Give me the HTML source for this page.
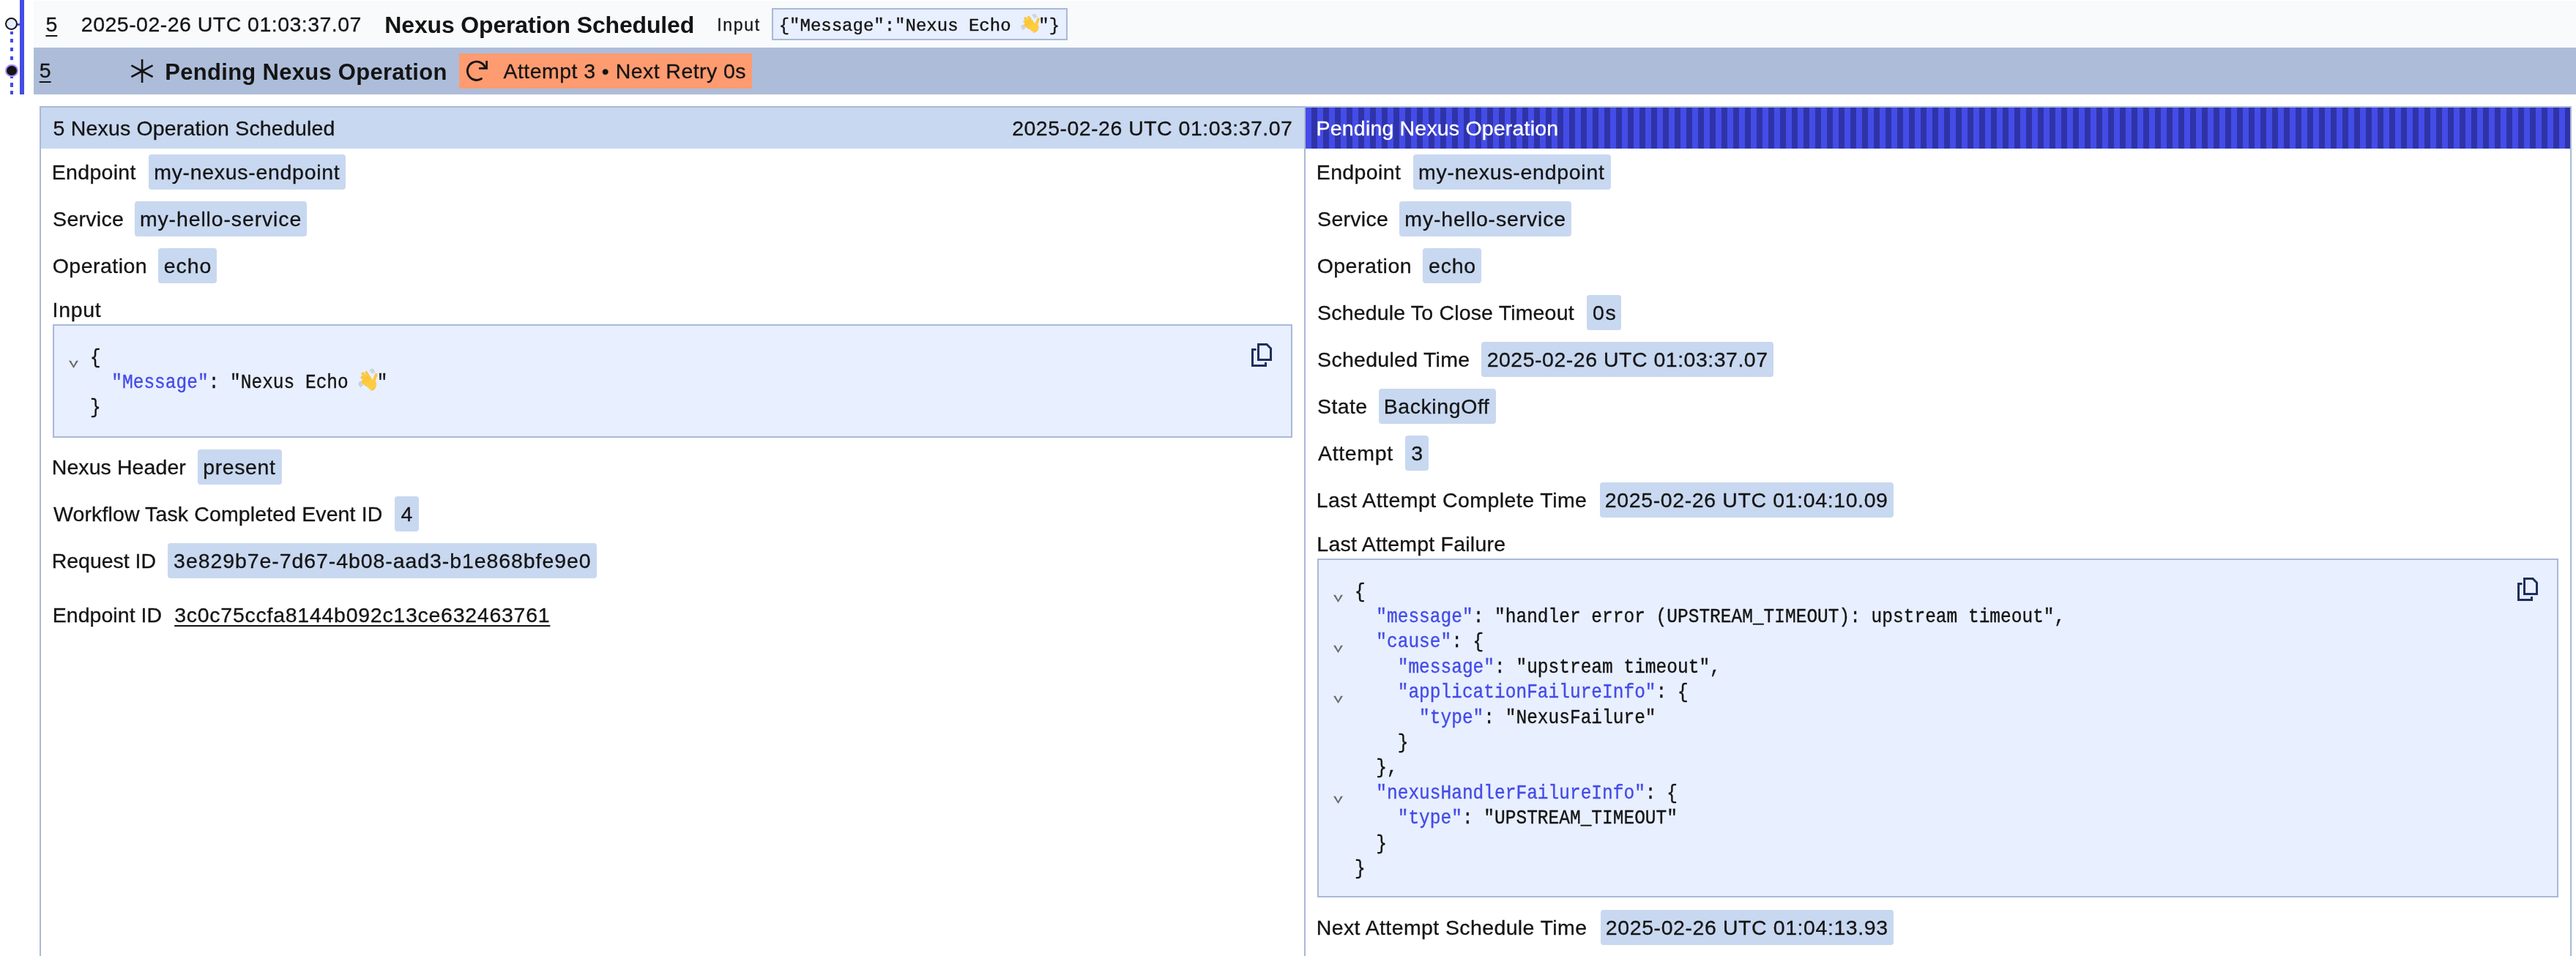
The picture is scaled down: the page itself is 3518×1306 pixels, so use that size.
<!DOCTYPE html>
<html><head><meta charset="utf-8"><title>Nexus Operation</title>
<style>
html,body{margin:0;padding:0;width:3518px;height:1306px;overflow:hidden;background:#fff}
.code{position:absolute;-webkit-text-stroke-width:0.35px;font-family:'Liberation Mono',monospace;font-size:24.5px;line-height:24.5px;color:#141414;white-space:pre}
</style></head><body>
<div style="position:absolute;left:46px;top:1px;width:3472px;height:64px;background:#f8fafc"></div><div style="position:absolute;left:1054px;top:11px;width:404px;height:44px;background:#e8efff;border:2px solid #a9b9d6;box-sizing:border-box"></div><div style="position:absolute;left:46px;top:65px;width:3472px;height:64px;background:#adbdd9"></div><div style="position:absolute;left:627px;top:73px;width:400px;height:48px;background:#ff9b70"></div><div style="position:absolute;left:54px;top:145px;width:3458px;height:1161px;border:2px solid #a9b9d6;border-bottom:none;box-sizing:border-box;background:#fff"></div><div style="position:absolute;left:56px;top:147px;width:1725px;height:56px;background:#c8d8f0"></div><div style="position:absolute;left:1781px;top:147px;width:2px;height:1159px;background:#a9b9d6"></div><div style="position:absolute;left:1783px;top:147px;width:1727px;height:56px;background:repeating-linear-gradient(90deg,#444ce7 0 8px,#2f33a8 8px 16px)"></div><div style="position:absolute;left:203.3px;top:211px;width:269.2px;height:48px;background:#c8d8f0;border-radius:4px"></div><div style="position:absolute;left:184px;top:275px;width:234.8px;height:48px;background:#c8d8f0;border-radius:4px"></div><div style="position:absolute;left:216px;top:339px;width:80px;height:48px;background:#c8d8f0;border-radius:4px"></div><div style="position:absolute;left:270.4px;top:614px;width:114.20000000000005px;height:48px;background:#c8d8f0;border-radius:4px"></div><div style="position:absolute;left:539.2px;top:678px;width:33.299999999999955px;height:48px;background:#c8d8f0;border-radius:4px"></div><div style="position:absolute;left:229.3px;top:742px;width:585.3px;height:48px;background:#c8d8f0;border-radius:4px"></div><div style="position:absolute;left:1930.2px;top:211px;width:269.4999999999998px;height:48px;background:#c8d8f0;border-radius:4px"></div><div style="position:absolute;left:1911.4px;top:275px;width:234.29999999999973px;height:48px;background:#c8d8f0;border-radius:4px"></div><div style="position:absolute;left:1943.2px;top:339px;width:79.5px;height:48px;background:#c8d8f0;border-radius:4px"></div><div style="position:absolute;left:2167.2px;top:403px;width:47.30000000000018px;height:48px;background:#c8d8f0;border-radius:4px"></div><div style="position:absolute;left:2023.3px;top:467px;width:398.29999999999995px;height:48px;background:#c8d8f0;border-radius:4px"></div><div style="position:absolute;left:1883.2px;top:531px;width:159.39999999999986px;height:48px;background:#c8d8f0;border-radius:4px"></div><div style="position:absolute;left:1919.4px;top:595px;width:32.09999999999991px;height:48px;background:#c8d8f0;border-radius:4px"></div><div style="position:absolute;left:2184.5px;top:659px;width:401.0px;height:48px;background:#c8d8f0;border-radius:4px"></div><div style="position:absolute;left:2185.5px;top:1243px;width:400.0999999999999px;height:48px;background:#c8d8f0;border-radius:4px"></div><div style="position:absolute;left:72px;top:443px;width:1693px;height:155px;background:#e8efff;border:2px solid #a9b9d6;box-sizing:border-box"></div><div style="position:absolute;left:1799px;top:763px;width:1695px;height:463px;background:#e8efff;border:2px solid #a9b9d6;box-sizing:border-box"></div>

<div style="position:absolute;left:27px;top:0;width:6px;height:129px;background:#444ce7"></div>
<div style="position:absolute;left:14px;top:43.3px;width:4px;height:3.7px;background:#444ce7"></div><div style="position:absolute;left:14px;top:52.7px;width:4px;height:5.7px;background:#444ce7"></div><div style="position:absolute;left:14px;top:64.6px;width:4px;height:5.7px;background:#444ce7"></div><div style="position:absolute;left:14px;top:76.6px;width:4px;height:5.6px;background:#444ce7"></div><div style="position:absolute;left:14px;top:100.5px;width:4px;height:6.0px;background:#444ce7"></div><div style="position:absolute;left:14px;top:113px;width:4px;height:5.7px;background:#444ce7"></div><div style="position:absolute;left:14px;top:124.3px;width:4px;height:4.4px;background:#444ce7"></div>
<div style="position:absolute;left:22px;top:31.5px;width:6px;height:3.5px;background:#444ce7"></div>
<div style="position:absolute;left:7.2px;top:24.2px;width:17.3px;height:17.3px;border-radius:50%;border:2.6px solid #141414;background:#e6edff;box-sizing:border-box"></div>
<div style="position:absolute;left:7.3px;top:88px;width:17.4px;height:17.4px;border-radius:50%;border:2.4px solid #a78bfa;background:#141414;box-sizing:border-box"></div>

<svg style="position:absolute;left:176px;top:80px" width="36" height="34" viewBox="0 0 36 34"><path d="M18.1 0.9 V32.9 M3.4 9.3 L32.6 25 M3.4 25 L32.6 9.3" stroke="#141414" stroke-width="2.6" fill="none"/></svg>
<svg style="position:absolute;left:634px;top:80px" width="36" height="34" viewBox="0 0 36 34"><path d="M28.32 11.28 A12.6 12.6 0 1 0 23.49 27.6" fill="none" stroke="#141414" stroke-width="2.9" stroke-linecap="round"/><path d="M20.1 13.45 H30.6 V2.9" fill="none" stroke="#141414" stroke-width="2.7" stroke-linejoin="miter"/></svg>
<div style="position:absolute;left:0;top:0;width:3518px;height:1306px;will-change:transform"><div style="position:absolute;left:62.41px;top:19.00px;font-family:'Liberation Sans';font-weight:normal;font-size:28.5px;line-height:28.5px;letter-spacing:0.000px;color:#141414;white-space:pre;-webkit-text-stroke:0.3px #141414;text-decoration:underline;text-decoration-thickness:2px;text-underline-offset:5px">5</div><div style="position:absolute;left:110.86px;top:19.00px;font-family:'Liberation Sans';font-weight:normal;font-size:28.5px;line-height:28.5px;letter-spacing:0.470px;color:#141414;white-space:pre;-webkit-text-stroke:0.3px #141414;">2025-02-26 UTC 01:03:37.07</div><div style="position:absolute;left:525.30px;top:18.00px;font-family:'Liberation Sans';font-weight:bold;font-size:32px;line-height:32px;letter-spacing:-0.159px;color:#141414;white-space:pre;">Nexus Operation Scheduled</div><div style="position:absolute;left:979.30px;top:23.00px;font-family:'Liberation Sans';font-weight:normal;font-size:23px;line-height:23px;letter-spacing:1.659px;color:#141414;white-space:pre;-webkit-text-stroke:0.3px #141414;">Input</div><div style="position:absolute;left:53.71px;top:82.00px;font-family:'Liberation Sans';font-weight:normal;font-size:28.5px;line-height:28.5px;letter-spacing:0.000px;color:#141414;white-space:pre;-webkit-text-stroke:0.3px #141414;text-decoration:underline;text-decoration-thickness:2px;text-underline-offset:5px">5</div><div style="position:absolute;left:225.36px;top:83.00px;font-family:'Liberation Sans';font-weight:bold;font-size:31px;line-height:31px;letter-spacing:0.277px;color:#141414;white-space:pre;">Pending Nexus Operation</div><div style="position:absolute;left:687.50px;top:83.00px;font-family:'Liberation Sans';font-weight:normal;font-size:28.5px;line-height:28.5px;letter-spacing:0.445px;color:#141414;white-space:pre;-webkit-text-stroke:0.3px #141414;">Attempt 3 • Next Retry 0s</div><div style="position:absolute;left:72.61px;top:161.00px;font-family:'Liberation Sans';font-weight:normal;font-size:28.5px;line-height:28.5px;letter-spacing:0.171px;color:#141414;white-space:pre;-webkit-text-stroke:0.3px #141414;">5 Nexus Operation Scheduled</div><div style="position:absolute;left:1382.16px;top:161.00px;font-family:'Liberation Sans';font-weight:normal;font-size:28.5px;line-height:28.5px;letter-spacing:0.482px;color:#141414;white-space:pre;-webkit-text-stroke:0.3px #141414;">2025-02-26 UTC 01:03:37.07</div><div style="position:absolute;left:1797.57px;top:161.00px;font-family:'Liberation Sans';font-weight:normal;font-size:28.5px;line-height:28.5px;letter-spacing:0.189px;color:#ffffff;white-space:pre;-webkit-text-stroke:0.3px #ffffff;">Pending Nexus Operation</div><div style="position:absolute;left:70.77px;top:220.60px;font-family:'Liberation Sans';font-weight:normal;font-size:28.5px;line-height:28.5px;letter-spacing:0.303px;color:#141414;white-space:pre;-webkit-text-stroke:0.3px #141414;">Endpoint</div><div style="position:absolute;left:210.22px;top:220.60px;font-family:'Liberation Sans';font-weight:normal;font-size:28.5px;line-height:28.5px;letter-spacing:0.694px;color:#141414;white-space:pre;-webkit-text-stroke:0.3px #141414;">my-nexus-endpoint</div><div style="position:absolute;left:72.11px;top:284.60px;font-family:'Liberation Sans';font-weight:normal;font-size:28.5px;line-height:28.5px;letter-spacing:0.286px;color:#141414;white-space:pre;-webkit-text-stroke:0.3px #141414;">Service</div><div style="position:absolute;left:190.92px;top:284.60px;font-family:'Liberation Sans';font-weight:normal;font-size:28.5px;line-height:28.5px;letter-spacing:0.858px;color:#141414;white-space:pre;-webkit-text-stroke:0.3px #141414;">my-hello-service</div><div style="position:absolute;left:71.66px;top:348.60px;font-family:'Liberation Sans';font-weight:normal;font-size:28.5px;line-height:28.5px;letter-spacing:0.484px;color:#141414;white-space:pre;-webkit-text-stroke:0.3px #141414;">Operation</div><div style="position:absolute;left:223.81px;top:348.60px;font-family:'Liberation Sans';font-weight:normal;font-size:28.5px;line-height:28.5px;letter-spacing:0.948px;color:#141414;white-space:pre;-webkit-text-stroke:0.3px #141414;">echo</div><div style="position:absolute;left:71.57px;top:409.00px;font-family:'Liberation Sans';font-weight:normal;font-size:28.5px;line-height:28.5px;letter-spacing:0.685px;color:#141414;white-space:pre;-webkit-text-stroke:0.3px #141414;">Input</div><div style="position:absolute;left:70.77px;top:623.60px;font-family:'Liberation Sans';font-weight:normal;font-size:28.5px;line-height:28.5px;letter-spacing:0.081px;color:#141414;white-space:pre;-webkit-text-stroke:0.3px #141414;">Nexus Header</div><div style="position:absolute;left:277.32px;top:623.60px;font-family:'Liberation Sans';font-weight:normal;font-size:28.5px;line-height:28.5px;letter-spacing:0.571px;color:#141414;white-space:pre;-webkit-text-stroke:0.3px #141414;">present</div><div style="position:absolute;left:73.00px;top:687.60px;font-family:'Liberation Sans';font-weight:normal;font-size:28.5px;line-height:28.5px;letter-spacing:0.118px;color:#141414;white-space:pre;-webkit-text-stroke:0.3px #141414;">Workflow Task Completed Event ID</div><div style="position:absolute;left:547.45px;top:687.60px;font-family:'Liberation Sans';font-weight:normal;font-size:28.5px;line-height:28.5px;letter-spacing:0.000px;color:#141414;white-space:pre;-webkit-text-stroke:0.3px #141414;">4</div><div style="position:absolute;left:70.77px;top:751.60px;font-family:'Liberation Sans';font-weight:normal;font-size:28.5px;line-height:28.5px;letter-spacing:-0.039px;color:#141414;white-space:pre;-webkit-text-stroke:0.3px #141414;">Request ID</div><div style="position:absolute;left:237.11px;top:751.60px;font-family:'Liberation Sans';font-weight:normal;font-size:28.5px;line-height:28.5px;letter-spacing:0.922px;color:#141414;white-space:pre;-webkit-text-stroke:0.3px #141414;">3e829b7e-7d67-4b08-aad3-b1e868bfe9e0</div><div style="position:absolute;left:71.77px;top:826.00px;font-family:'Liberation Sans';font-weight:normal;font-size:28.5px;line-height:28.5px;letter-spacing:0.039px;color:#141414;white-space:pre;-webkit-text-stroke:0.3px #141414;">Endpoint ID</div><div style="position:absolute;left:238.21px;top:826.00px;font-family:'Liberation Sans';font-weight:normal;font-size:28.5px;line-height:28.5px;letter-spacing:0.734px;color:#141414;white-space:pre;-webkit-text-stroke:0.3px #141414;text-decoration:underline;text-decoration-thickness:2px;text-underline-offset:4px">3c0c75ccfa8144b092c13ce632463761</div><div style="position:absolute;left:1797.77px;top:220.60px;font-family:'Liberation Sans';font-weight:normal;font-size:28.5px;line-height:28.5px;letter-spacing:0.374px;color:#141414;white-space:pre;-webkit-text-stroke:0.3px #141414;">Endpoint</div><div style="position:absolute;left:1937.12px;top:220.60px;font-family:'Liberation Sans';font-weight:normal;font-size:28.5px;line-height:28.5px;letter-spacing:0.713px;color:#141414;white-space:pre;-webkit-text-stroke:0.3px #141414;">my-nexus-endpoint</div><div style="position:absolute;left:1799.11px;top:284.60px;font-family:'Liberation Sans';font-weight:normal;font-size:28.5px;line-height:28.5px;letter-spacing:0.286px;color:#141414;white-space:pre;-webkit-text-stroke:0.3px #141414;">Service</div><div style="position:absolute;left:1918.32px;top:284.60px;font-family:'Liberation Sans';font-weight:normal;font-size:28.5px;line-height:28.5px;letter-spacing:0.825px;color:#141414;white-space:pre;-webkit-text-stroke:0.3px #141414;">my-hello-service</div><div style="position:absolute;left:1798.66px;top:348.60px;font-family:'Liberation Sans';font-weight:normal;font-size:28.5px;line-height:28.5px;letter-spacing:0.472px;color:#141414;white-space:pre;-webkit-text-stroke:0.3px #141414;">Operation</div><div style="position:absolute;left:1951.01px;top:348.60px;font-family:'Liberation Sans';font-weight:normal;font-size:28.5px;line-height:28.5px;letter-spacing:0.782px;color:#141414;white-space:pre;-webkit-text-stroke:0.3px #141414;">echo</div><div style="position:absolute;left:1799.11px;top:412.60px;font-family:'Liberation Sans';font-weight:normal;font-size:28.5px;line-height:28.5px;letter-spacing:0.168px;color:#141414;white-space:pre;-webkit-text-stroke:0.3px #141414;">Schedule To Close Timeout</div><div style="position:absolute;left:2175.01px;top:412.60px;font-family:'Liberation Sans';font-weight:normal;font-size:28.5px;line-height:28.5px;letter-spacing:1.581px;color:#141414;white-space:pre;-webkit-text-stroke:0.3px #141414;">0s</div><div style="position:absolute;left:1799.11px;top:476.60px;font-family:'Liberation Sans';font-weight:normal;font-size:28.5px;line-height:28.5px;letter-spacing:0.274px;color:#141414;white-space:pre;-webkit-text-stroke:0.3px #141414;">Scheduled Time</div><div style="position:absolute;left:2030.66px;top:476.60px;font-family:'Liberation Sans';font-weight:normal;font-size:28.5px;line-height:28.5px;letter-spacing:0.506px;color:#141414;white-space:pre;-webkit-text-stroke:0.3px #141414;">2025-02-26 UTC 01:03:37.07</div><div style="position:absolute;left:1799.11px;top:540.60px;font-family:'Liberation Sans';font-weight:normal;font-size:28.5px;line-height:28.5px;letter-spacing:0.350px;color:#141414;white-space:pre;-webkit-text-stroke:0.3px #141414;">State</div><div style="position:absolute;left:1889.67px;top:540.60px;font-family:'Liberation Sans';font-weight:normal;font-size:28.5px;line-height:28.5px;letter-spacing:0.583px;color:#141414;white-space:pre;-webkit-text-stroke:0.3px #141414;">BackingOff</div><div style="position:absolute;left:1800.00px;top:604.60px;font-family:'Liberation Sans';font-weight:normal;font-size:28.5px;line-height:28.5px;letter-spacing:0.650px;color:#141414;white-space:pre;-webkit-text-stroke:0.3px #141414;">Attempt</div><div style="position:absolute;left:1927.21px;top:604.60px;font-family:'Liberation Sans';font-weight:normal;font-size:28.5px;line-height:28.5px;letter-spacing:0.000px;color:#141414;white-space:pre;-webkit-text-stroke:0.3px #141414;">3</div><div style="position:absolute;left:1797.77px;top:668.60px;font-family:'Liberation Sans';font-weight:normal;font-size:28.5px;line-height:28.5px;letter-spacing:0.448px;color:#141414;white-space:pre;-webkit-text-stroke:0.3px #141414;">Last Attempt Complete Time</div><div style="position:absolute;left:2191.86px;top:668.60px;font-family:'Liberation Sans';font-weight:normal;font-size:28.5px;line-height:28.5px;letter-spacing:0.614px;color:#141414;white-space:pre;-webkit-text-stroke:0.3px #141414;">2025-02-26 UTC 01:04:10.09</div><div style="position:absolute;left:1798.37px;top:729.00px;font-family:'Liberation Sans';font-weight:normal;font-size:28.5px;line-height:28.5px;letter-spacing:0.224px;color:#141414;white-space:pre;-webkit-text-stroke:0.3px #141414;">Last Attempt Failure</div><div style="position:absolute;left:1797.77px;top:1252.60px;font-family:'Liberation Sans';font-weight:normal;font-size:28.5px;line-height:28.5px;letter-spacing:0.388px;color:#141414;white-space:pre;-webkit-text-stroke:0.3px #141414;">Next Attempt Schedule Time</div><div style="position:absolute;left:2192.86px;top:1252.60px;font-family:'Liberation Sans';font-weight:normal;font-size:28.5px;line-height:28.5px;letter-spacing:0.578px;color:#141414;white-space:pre;-webkit-text-stroke:0.3px #141414;">2025-02-26 UTC 01:04:13.93</div>
<div class="code" style="left:1063.7px;top:23.60px;font-size:24px;line-height:24px">{"Message":"Nexus Echo <span style="display:inline-block;position:relative;width:23.3px;height:0"><svg style="position:absolute;left:-0.98px;top:-22.5px" width="26.44" height="26.44" viewBox="-1 -3 27 27"><g stroke="#a8a8a8" stroke-width="0.75" stroke-linecap="round"><path d="M15.4 -1.6L18.6 2.6M16.9 -2.4L20.1 1.8M18.4 -3.1L21.6 1.1"/><path d="M0.4 13.2L3.8 17.8M1.8 12.5L5.2 17.1M-0.6 14.6L2.6 19"/></g><g stroke="#f2ae14" stroke-width="3.4" stroke-linecap="round"><path d="M10.2 1.8L16 10M5.4 3.2L13 11M4.4 7.5L12 14M5.2 12.6L12 17M23.6 4.4L20.5 12"/></g><g stroke="#ffcd3f" stroke-width="2.6" stroke-linecap="round"><path d="M10.2 1.8L16 10M5.4 3.2L13 11M4.4 7.5L12 14M5.2 12.6L12 17M23.6 4.4L20.5 12"/></g><ellipse cx="17.9" cy="15.9" rx="6.4" ry="6.1" transform="rotate(-40 17.9 15.9)" fill="#ffcd3f"/><path d="M22.5 19.5c-1.6 2.5-4 3.6-6.5 3.2" stroke="#f0a000" stroke-width="1" fill="none" opacity=".6"/></svg></span>"}</div>
<div class="code" style="left:122.90px;top:477.60px;transform:scaleY(1.15);transform-origin:0 18px">{</div><div class="code" style="left:122.90px;top:512.00px;transform:scaleY(1.15);transform-origin:0 18px">  <span style="color:#444ce7">&quot;Message&quot;</span>: &quot;Nexus Echo <span style="display:inline-block;position:relative;width:24.35px;height:0"><svg style="position:absolute;left:-1.00px;top:-22.9px" width="27.00" height="27.00" viewBox="-1 -3 27 27"><g stroke="#a8a8a8" stroke-width="0.75" stroke-linecap="round"><path d="M15.4 -1.6L18.6 2.6M16.9 -2.4L20.1 1.8M18.4 -3.1L21.6 1.1"/><path d="M0.4 13.2L3.8 17.8M1.8 12.5L5.2 17.1M-0.6 14.6L2.6 19"/></g><g stroke="#f2ae14" stroke-width="3.4" stroke-linecap="round"><path d="M10.2 1.8L16 10M5.4 3.2L13 11M4.4 7.5L12 14M5.2 12.6L12 17M23.6 4.4L20.5 12"/></g><g stroke="#ffcd3f" stroke-width="2.6" stroke-linecap="round"><path d="M10.2 1.8L16 10M5.4 3.2L13 11M4.4 7.5L12 14M5.2 12.6L12 17M23.6 4.4L20.5 12"/></g><ellipse cx="17.9" cy="15.9" rx="6.4" ry="6.1" transform="rotate(-40 17.9 15.9)" fill="#ffcd3f"/><path d="M22.5 19.5c-1.6 2.5-4 3.6-6.5 3.2" stroke="#f0a000" stroke-width="1" fill="none" opacity=".6"/></svg></span>&quot;</div><div class="code" style="left:122.90px;top:546.40px;transform:scaleY(1.15);transform-origin:0 18px">}</div><div class="code" style="left:1849.90px;top:797.60px;transform:scaleY(1.15);transform-origin:0 18px">{</div><div class="code" style="left:1849.90px;top:832.00px;transform:scaleY(1.15);transform-origin:0 18px">  <span style="color:#444ce7">&quot;message&quot;</span>: &quot;handler error (UPSTREAM_TIMEOUT): upstream timeout&quot;,</div><div class="code" style="left:1849.90px;top:866.40px;transform:scaleY(1.15);transform-origin:0 18px">  <span style="color:#444ce7">&quot;cause&quot;</span>: {</div><div class="code" style="left:1849.90px;top:900.80px;transform:scaleY(1.15);transform-origin:0 18px">    <span style="color:#444ce7">&quot;message&quot;</span>: &quot;upstream timeout&quot;,</div><div class="code" style="left:1849.90px;top:935.20px;transform:scaleY(1.15);transform-origin:0 18px">    <span style="color:#444ce7">&quot;applicationFailureInfo&quot;</span>: {</div><div class="code" style="left:1849.90px;top:969.60px;transform:scaleY(1.15);transform-origin:0 18px">      <span style="color:#444ce7">&quot;type&quot;</span>: &quot;NexusFailure&quot;</div><div class="code" style="left:1849.90px;top:1004.00px;transform:scaleY(1.15);transform-origin:0 18px">    }</div><div class="code" style="left:1849.90px;top:1038.40px;transform:scaleY(1.15);transform-origin:0 18px">  },</div><div class="code" style="left:1849.90px;top:1072.80px;transform:scaleY(1.15);transform-origin:0 18px">  <span style="color:#444ce7">&quot;nexusHandlerFailureInfo&quot;</span>: {</div><div class="code" style="left:1849.90px;top:1107.20px;transform:scaleY(1.15);transform-origin:0 18px">    <span style="color:#444ce7">&quot;type&quot;</span>: &quot;UPSTREAM_TIMEOUT&quot;</div><div class="code" style="left:1849.90px;top:1141.60px;transform:scaleY(1.15);transform-origin:0 18px">  }</div><div class="code" style="left:1849.90px;top:1176.00px;transform:scaleY(1.15);transform-origin:0 18px">}</div>
<svg style="position:absolute;left:93.9px;top:492.1px" width="14" height="11" viewBox="0 0 14 11"><path d="M0 0.8 L2.9 0.8 L6.5 7.4 L10.1 0.8 L13 0.8 L6.5 10.9 Z" fill="#6b6b6b"/></svg><svg style="position:absolute;left:1820.9px;top:812.1px" width="14" height="11" viewBox="0 0 14 11"><path d="M0 0.8 L2.9 0.8 L6.5 7.4 L10.1 0.8 L13 0.8 L6.5 10.9 Z" fill="#6b6b6b"/></svg><svg style="position:absolute;left:1820.9px;top:880.9px" width="14" height="11" viewBox="0 0 14 11"><path d="M0 0.8 L2.9 0.8 L6.5 7.4 L10.1 0.8 L13 0.8 L6.5 10.9 Z" fill="#6b6b6b"/></svg><svg style="position:absolute;left:1820.9px;top:949.7px" width="14" height="11" viewBox="0 0 14 11"><path d="M0 0.8 L2.9 0.8 L6.5 7.4 L10.1 0.8 L13 0.8 L6.5 10.9 Z" fill="#6b6b6b"/></svg><svg style="position:absolute;left:1820.9px;top:1087.3px" width="14" height="11" viewBox="0 0 14 11"><path d="M0 0.8 L2.9 0.8 L6.5 7.4 L10.1 0.8 L13 0.8 L6.5 10.9 Z" fill="#6b6b6b"/></svg>
<svg style="position:absolute;left:1709px;top:468.7px" width="28" height="32" viewBox="0 0 28 32"><path d="M9.5 1.5 H21 L26.5 7 V22.5 H9.5 Z" fill="none" stroke="#1d2f5e" stroke-width="3"/><path d="M6.5 8.5 H1.5 V30.5 H19.5 V26" fill="none" stroke="#1d2f5e" stroke-width="3"/></svg><svg style="position:absolute;left:3438px;top:788.8px" width="28" height="32" viewBox="0 0 28 32"><path d="M9.5 1.5 H21 L26.5 7 V22.5 H9.5 Z" fill="none" stroke="#1d2f5e" stroke-width="3"/><path d="M6.5 8.5 H1.5 V30.5 H19.5 V26" fill="none" stroke="#1d2f5e" stroke-width="3"/></svg>
</div>
</body></html>
